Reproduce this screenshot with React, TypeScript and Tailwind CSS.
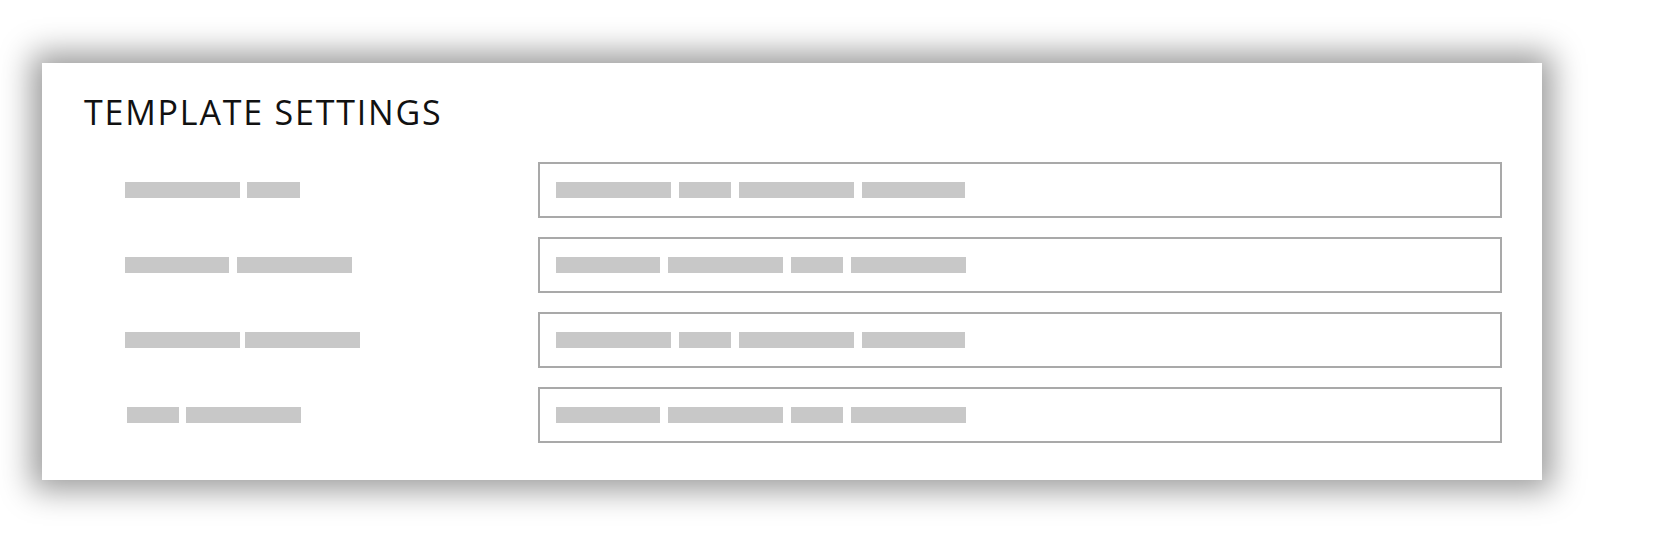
const LONG = "w-[115px]";
const MID = "w-[104px]";
const SHORT = "w-[52px]";

type Row = { label: string[]; labelGap: string; value: string[] };

// skeleton word widths for each label / value line
const rows: Row[] = [
  { label: [LONG, "w-[53px]"], labelGap: "gap-[7px]", value: [LONG, SHORT, LONG, "w-[103px]"] },
  { label: [MID, LONG], labelGap: "gap-[8px]", value: [MID, LONG, SHORT, LONG] },
  { label: [LONG, LONG], labelGap: "gap-[5px]", value: [LONG, SHORT, LONG, "w-[103px]"] },
  { label: ["ml-[2px] w-[52px]", LONG], labelGap: "gap-[7px]", value: [MID, LONG, SHORT, LONG] },
];

function Bars({ widths, gap }: { widths: string[]; gap: string }) {
  return (
    <div className={`flex items-center ${gap}`}>
      {widths.map((w, i) => (
        <span key={i} className={`block h-[16px] bg-[#c8c8c8] ${w}`} />
      ))}
    </div>
  );
}

export default function App() {
  return (
    <div className="min-h-screen bg-white pl-[42px] pt-[63px]">
      <section className="flex w-[1500px] flex-col bg-white pb-[37px] pl-[42px] pr-[40px] pt-[32px] shadow-[0_0_30px_10px_rgba(0,0,0,0.4)]">
        <h1 className="h-[34px] font-['Open_Sans',sans-serif] text-[34px] font-normal leading-none tracking-[1.8px] text-[#111]">
          TEMPLATE SETTINGS
        </h1>
        <div className="mt-[33px] flex flex-col gap-[19px]">
          {rows.map((r, i) => (
            <div key={i} className="flex h-[56px] items-center">
              <div className="w-[454px] pl-[41px]">
                <Bars widths={r.label} gap={r.labelGap} />
              </div>
              <div className="flex h-full flex-1 items-center border-2 border-[#a9a9a9] pl-[16px]">
                <Bars widths={r.value} gap="gap-[8px]" />
              </div>
            </div>
          ))}
        </div>
      </section>
    </div>
  );
}
